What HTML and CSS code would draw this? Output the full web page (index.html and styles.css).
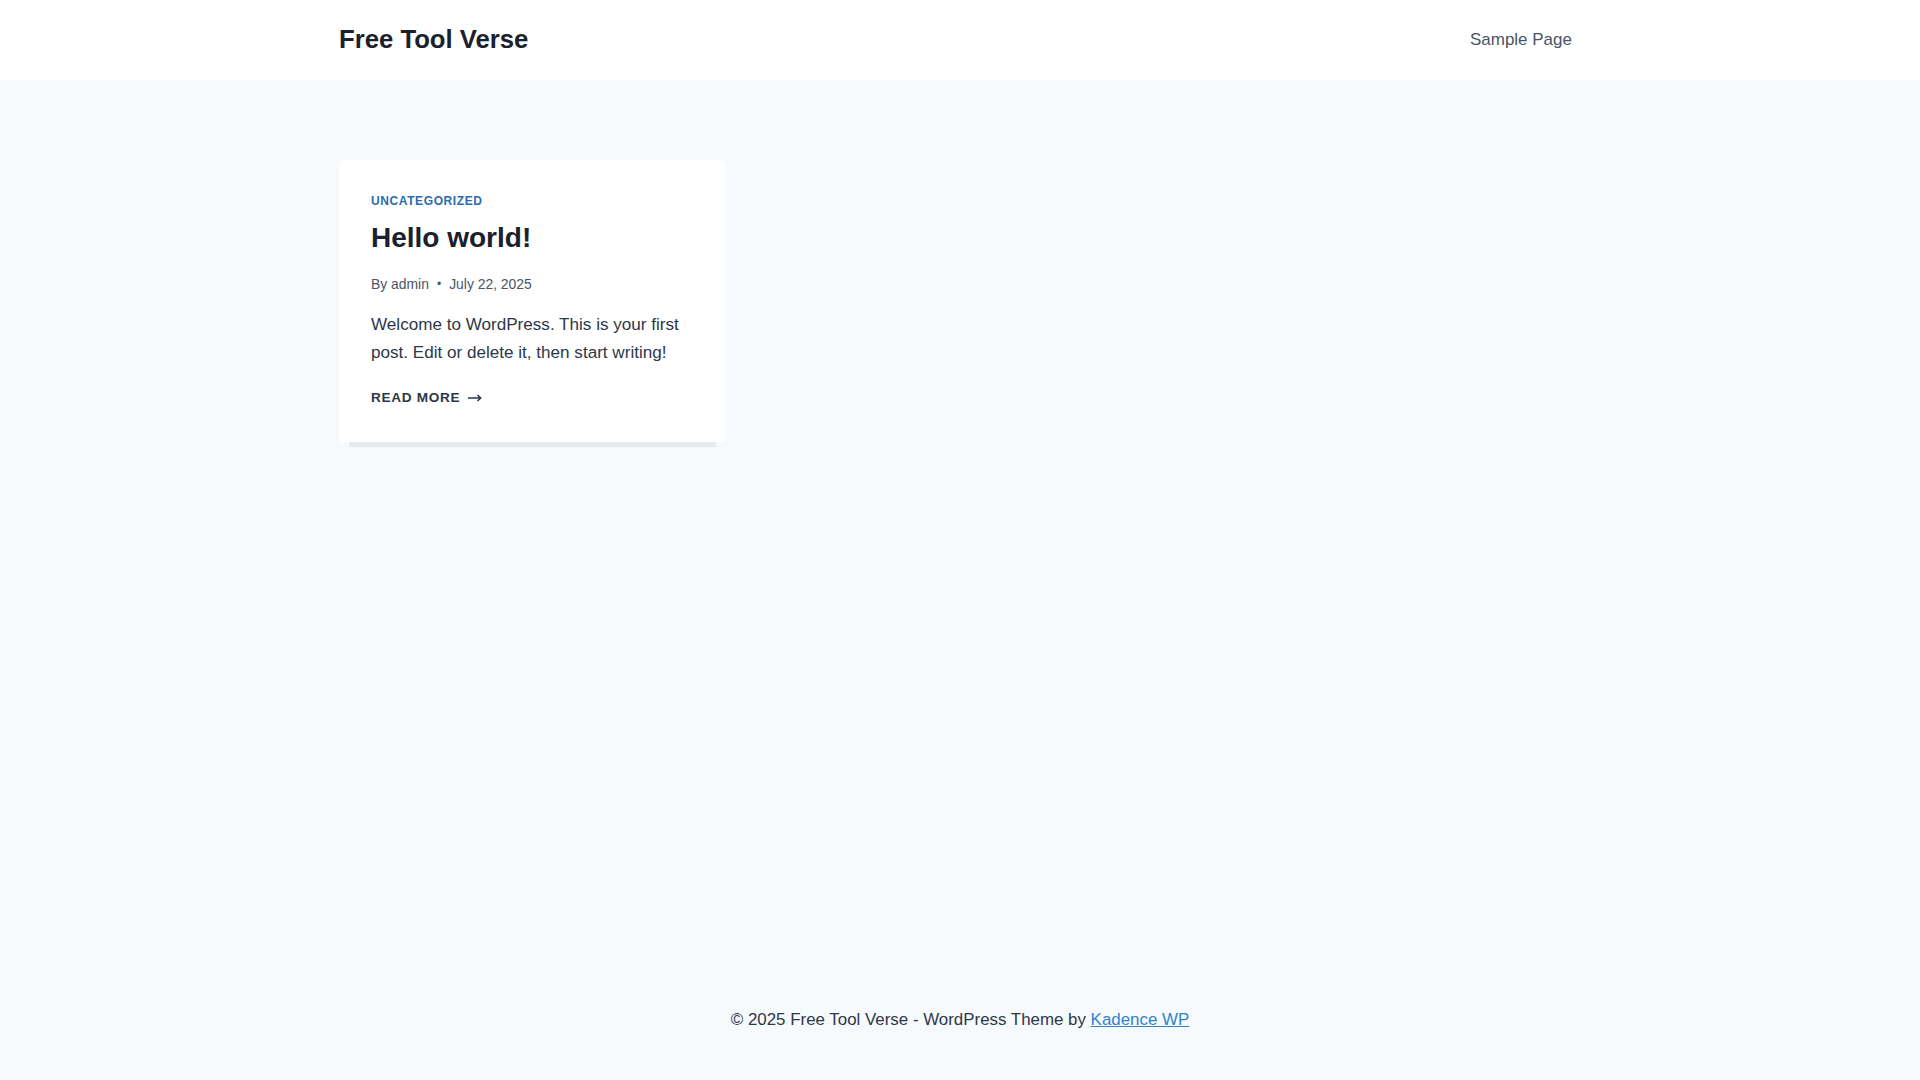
FILE: index.html
```html
<!DOCTYPE html>
<html lang="en">
<head>
<meta charset="utf-8">
<title>Free Tool Verse</title>
<link rel="stylesheet" href="styles.css">
</head>
<body>
<div class="site">
  <header class="site-header">
    <div class="container header-inner">
      <a class="site-title" href="#">Free Tool Verse</a>
      <nav class="main-nav">
        <a href="#">Sample Page</a>
      </nav>
    </div>
  </header>
  <main class="site-main">
    <div class="container">
      <div class="posts-grid">
        <article class="entry-card">
          <div class="entry-taxonomies"><a href="#">Uncategorized</a></div>
          <h2 class="entry-title">Hello world!</h2>
          <div class="entry-meta">
            <span class="meta-author">By <a href="#">admin</a></span>
            <span class="meta-sep">•</span>
            <span class="meta-date">July 22, 2025</span>
          </div>
          <p class="entry-summary">Welcome to WordPress. This is your first post. Edit or delete it, then start writing!</p>
          <a class="more-link" href="#">Read More
            <svg class="more-arrow" width="14" height="8" viewBox="0 0 14 8" aria-hidden="true"><path d="M0 4h12.5M9.5 1l3.2 3-3.2 3" fill="none" stroke="currentColor" stroke-width="1.6"/></svg>
          </a>
        </article>
      </div>
    </div>
  </main>
  <footer class="site-footer">
    <div class="container footer-inner">
      <p>© 2025 Free Tool Verse - WordPress Theme by <a href="#">Kadence WP</a></p>
    </div>
  </footer>
</div>
</body>
</html>
```

FILE: styles.css
```css
* { box-sizing: border-box; }
html, body { margin: 0; padding: 0; }
body {
  font-family: "Liberation Sans", Arial, sans-serif;
  font-size: 17px;
  line-height: 1.6;
  color: #2d3748;
  background: #f7fafc;
}
a { text-decoration: none; color: inherit; }

.site {
  min-height: 100vh;
  display: flex;
  flex-direction: column;
}

.container {
  max-width: 1290px;
  margin: 0 auto;
  padding: 0 24px;
  width: 100%;
}

.site-header { background: #ffffff; }
.header-inner {
  height: 80px;
  display: flex;
  align-items: center;
  justify-content: space-between;
}
.site-title {
  font-size: 25.7px;
  font-weight: 700;
  color: #1a202c;
  line-height: 1.2;
  padding-bottom: 2px;
}
.main-nav a {
  color: #4a5568;
  font-size: 17px;
  padding: 0 9px 0 0;
}

.site-main {
  flex: 1;
  padding-top: 80px;
}
.posts-grid {
  display: grid;
  grid-template-columns: repeat(3, 1fr);
  gap: 40px;
}
.entry-card {
  background: #ffffff;
  border-radius: 5px;
  padding: 32px;
  box-shadow: 0 15px 0 -10px rgba(0, 0, 0, 0.06);
}
.entry-taxonomies {
  font-size: 12px;
  line-height: 18px;
  font-weight: 700;
  letter-spacing: 0.05em;
  text-transform: uppercase;
  color: #2b6cb0;
  margin-bottom: 7px;
}
.entry-taxonomies a { color: #2b6cb0; }
.entry-title {
  margin: 0;
  font-size: 28px;
  line-height: 42px;
  font-weight: 700;
  color: #1a202c;
}
.entry-meta {
  margin-top: 14px;
  font-size: 13.9px;
  line-height: 22px;
  color: #4a5568;
  display: flex;
  align-items: center;
}
.meta-sep { margin: 0 8px 0 8px; font-size: 12px; }
.entry-summary {
  margin: 16px 0 0;
  font-size: 17.1px;
  line-height: 27.6px;
  color: #2d3748;
}
.more-link {
  display: inline-flex;
  align-items: center;
  margin-top: 21px;
  font-size: 13.6px;
  line-height: 22px;
  font-weight: 700;
  letter-spacing: 0.05em;
  text-transform: uppercase;
  color: #2d3748;
}
.more-arrow { margin-left: 8px; margin-top: -1px; }

.site-footer { background: #f7fafc; }
.footer-inner {
  height: 122px;
  display: flex;
  align-items: center;
  justify-content: center;
}
.footer-inner p {
  margin: 0;
  font-size: 16.9px;
  line-height: 27px;
  color: #2d3748;
}
.footer-inner a {
  color: #3182ce;
  text-decoration: underline;
}
```
